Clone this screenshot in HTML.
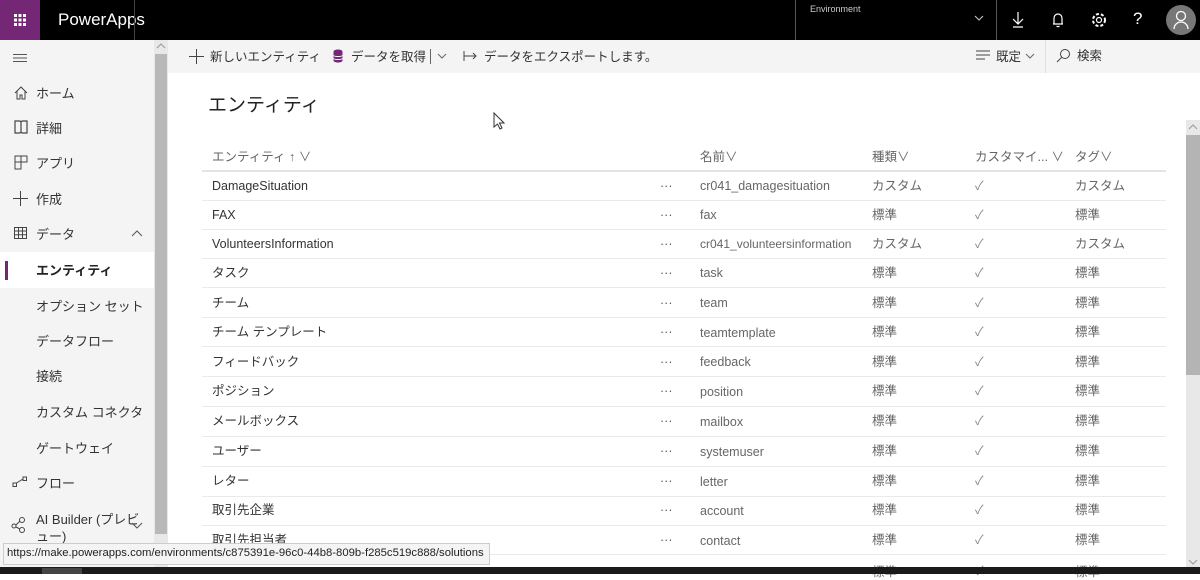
<!DOCTYPE html>
<html><head><meta charset="utf-8">
<style>
*{margin:0;padding:0;box-sizing:border-box}
body{width:1200px;height:574px;overflow:hidden;background:#fff;font-family:"Liberation Sans","Noto Sans CJK JP",sans-serif;color:#333;position:relative;font-size:13px}
.a{position:absolute;white-space:nowrap}
.top{left:0;top:0;width:1200px;height:40px;background:#000}
.waffle{left:0;top:0;width:40px;height:40px;background:#742774}
.side{left:0;top:40px;width:154px;height:527px;background:#f4f4f4}
.sb{left:154px;top:40px;width:14px;height:527px;background:#e8e8e8}
.tb{left:168px;top:40px;width:1032px;height:33px;background:#f4f4f4}
.nav{font-size:13px;color:#333;margin-top:-2px}
.row{left:202px;width:964px;height:1px;background:#eaeaea}
.c{font-size:12.5px;color:#333}
.j{margin-top:-3px}
.d{margin-top:4px;color:#555}
.g{color:#666}
.k{color:#888}
svg{position:absolute}
</style></head><body>
<div class="a top"></div>
<div class="a waffle"></div>
<svg style="left:14px;top:14px" width="12" height="12" fill="#fff"><rect x="0" y="0" width="3" height="3"/><rect x="4.5" y="0" width="3" height="3"/><rect x="9" y="0" width="3" height="3"/><rect x="0" y="4.5" width="3" height="3"/><rect x="4.5" y="4.5" width="3" height="3"/><rect x="9" y="4.5" width="3" height="3"/><rect x="0" y="9" width="3" height="3"/><rect x="4.5" y="9" width="3" height="3"/><rect x="9" y="9" width="3" height="3"/></svg>
<div class="a" style="left:58px;top:10px;color:#fff;font-size:17px">PowerApps</div>
<div class="a" style="left:134px;top:0;width:1px;height:40px;background:#444"></div>
<div class="a" style="left:795px;top:0;width:202px;height:40px;border-left:1px solid #555;border-right:1px solid #555"></div>
<div class="a" style="left:810px;top:4px;color:#ccc;font-size:9px">Environment</div>
<svg style="left:974px;top:14px" width="10" height="8"><path d="M1 2l4 4 4-4" stroke="#ccc" fill="none"/></svg>
<svg style="left:1010px;top:11px" width="16" height="18"><path d="M8 1v12M3 8l5 5 5-5M3 16h10" stroke="#fff" fill="none" stroke-width="1.2"/></svg>
<svg style="left:1050px;top:11px" width="16" height="18"><path d="M4 13V7a4 4 0 018 0v6H3h10M6.5 15.5h3" stroke="#fff" fill="none" stroke-width="1.2"/></svg>
<svg style="left:1090px;top:11px" width="18" height="18"><circle cx="9" cy="9" r="2.5" stroke="#fff" fill="none" stroke-width="1.2"/><circle cx="9" cy="9" r="6" stroke="#fff" fill="none" stroke-width="2" stroke-dasharray="3 2"/></svg>
<div class="a" style="left:1133px;top:9px;color:#fff;font-size:17px">?</div>
<div class="a" style="left:1166px;top:5px;width:30px;height:30px;border-radius:50%;background:#777"></div>
<svg style="left:1172px;top:10px" width="18" height="20"><circle cx="9" cy="6" r="4.5" stroke="#fff" fill="none" stroke-width="1.3"/><path d="M2 19a7 7 0 0114 0" stroke="#fff" fill="none" stroke-width="1.3"/></svg>

<div class="a side"></div>
<div class="a sb"></div>
<div class="a" style="left:155px;top:54px;width:12px;height:480px;background:#b8b8b8"></div>
<svg style="left:156px;top:42px" width="10" height="8"><path d="M1 6l4-4 4 4" stroke="#999" fill="none"/></svg>
<svg style="left:13px;top:53px" width="14" height="10"><path d="M0 1.5h14M0 5h14M0 8.5h14" stroke="#555"/></svg>
<svg style="left:14px;top:86px" width="14" height="14"><path d="M1 7L7 1l6 6M3 5v8h3V9h2v4h3V5" stroke="#444" fill="none"/></svg>
<div class="a nav" style="left:36px;top:85px">ホーム</div>
<svg style="left:14px;top:120px" width="14" height="14"><path d="M1 1h5l1 1 1-1h5v12H8l-1 -1-1 1H1zM7 2v10" stroke="#444" fill="none" stroke-width="1.2"/></svg>
<div class="a nav" style="left:36px;top:120px">詳細</div>
<svg style="left:14px;top:155px" width="14" height="15"><path d="M1 1h12v6H7v7H1zM7 1v6M1 7h6" stroke="#444" fill="none"/></svg>
<div class="a nav" style="left:36px;top:155px">アプリ</div>
<svg style="left:13px;top:191px" width="15" height="15"><path d="M7.5 0v15M0 7.5h15" stroke="#444"/></svg>
<div class="a nav" style="left:36px;top:191px">作成</div>
<svg style="left:14px;top:227px" width="13" height="12"><path d="M.5.5h12v11H.5zM.5 4h12M.5 7.7h12M4.5.5v11M8.5.5v11" stroke="#444" fill="none"/></svg>
<div class="a nav" style="left:36px;top:226px">データ</div>
<svg style="left:131px;top:230px" width="12" height="8"><path d="M1 6l5-5 5 5" stroke="#555" fill="none"/></svg>
<div class="a" style="left:0;top:252px;width:154px;height:36px;background:#fff"></div>
<div class="a" style="left:5px;top:261px;width:3px;height:19px;background:#742774"></div>
<div class="a nav" style="left:36px;top:262px;font-weight:bold;color:#222">エンティティ</div>
<div class="a nav" style="left:36px;top:298px">オプション セット</div>
<div class="a nav" style="left:36px;top:333px">データフロー</div>
<div class="a nav" style="left:36px;top:368px">接続</div>
<div class="a nav" style="left:36px;top:404px">カスタム コネクタ</div>
<div class="a nav" style="left:36px;top:440px">ゲートウェイ</div>
<svg style="left:12px;top:476px" width="16" height="12"><rect x="1" y="7" width="3.5" height="3.5" stroke="#444" fill="none"/><rect x="11" y="1" width="3.5" height="3.5" stroke="#444" fill="none"/><path d="M4.5 7L11 3" stroke="#444"/></svg>
<div class="a nav" style="left:36px;top:475px">フロー</div>
<svg style="left:11px;top:516px" width="18" height="18"><circle cx="3" cy="10" r="2" stroke="#444" fill="none"/><circle cx="11" cy="4" r="2.5" stroke="#444" fill="none"/><circle cx="11" cy="14" r="2.5" stroke="#444" fill="none"/><path d="M5 9l4-4M5 11l4 2" stroke="#444"/></svg>
<div class="a nav" style="left:36px;top:511px">AI Builder (プレビ</div>
<div class="a nav" style="left:36px;top:528px">ュー)</div>
<svg style="left:131px;top:522px" width="12" height="8"><path d="M1 1l5 5 5-5" stroke="#555" fill="none"/></svg>

<div class="a tb"></div>
<svg style="left:189px;top:49px" width="15" height="15"><path d="M7.5 0v15M0 7.5h15" stroke="#444"/></svg>
<div class="a c j" style="left:210px;top:49px">新しいエンティティ</div>
<svg style="left:333px;top:49px" width="10" height="14"><ellipse cx="5" cy="2.5" rx="4.5" ry="2" fill="#742774"/><path d="M.5 3v8.5c0 1.2 2 2 4.5 2s4.5-.8 4.5-2V3" fill="#742774"/><path d="M.5 6.5c1 1.3 8 1.3 9 0M.5 9.5c1 1.3 8 1.3 9 0" stroke="#fff" fill="none"/></svg>
<div class="a c j" style="left:351px;top:49px">データを取得</div>
<div class="a" style="left:430px;top:49px;width:1px;height:15px;background:#666"></div>
<svg style="left:437px;top:53px" width="10" height="7"><path d="M1 1l4 4 4-4" stroke="#666" fill="none"/></svg>
<svg style="left:463px;top:51px" width="15" height="10"><path d="M1 0v10M1 5h12M10 2l3 3-3 3" stroke="#444" fill="none"/></svg>
<div class="a c j" style="left:484px;top:49px">データをエクスポートします。</div>
<svg style="left:976px;top:50px" width="14" height="10"><path d="M0 1h14M0 5h14M0 9h9" stroke="#444"/></svg>
<div class="a c j" style="left:996px;top:49px">既定</div>
<svg style="left:1025px;top:53px" width="10" height="7"><path d="M1 1l4 4 4-4" stroke="#666" fill="none"/></svg>
<div class="a" style="left:1045px;top:40px;width:1px;height:33px;background:#e0e0e0"></div>
<svg style="left:1056px;top:48px" width="15" height="15"><circle cx="9" cy="6" r="4.5" stroke="#444" fill="none"/><path d="M5.8 9.2L1 14" stroke="#444"/></svg>
<div class="a c j" style="left:1077px;top:48px">検索</div>

<div class="a j" style="left:208px;top:93px;font-size:19px;color:#222">エンティティ</div>
<svg style="left:493px;top:112px" width="12" height="18"><path d="M1 1v14l3.5-3 2.5 5 2-1-2.5-5H11z" fill="#fff" stroke="#333"/></svg>

<div class="a" style="left:1186px;top:120px;width:14px;height:447px;background:#e8e8e8"></div>
<div class="a" style="left:1186px;top:135px;width:14px;height:240px;background:#b4b4b4"></div>
<svg style="left:1188px;top:123px" width="10" height="8"><path d="M1 6l4-4 4 4" stroke="#999" fill="none"/></svg>
<svg style="left:1188px;top:558px" width="10" height="8"><path d="M1 2l4 4 4-4" stroke="#999" fill="none"/></svg>

<div class="a c g j" style="left:212px;top:149px">エンティティ ↑ ∨</div>
<div class="a c g j" style="left:700px;top:149px">名前∨</div>
<div class="a c g j" style="left:872px;top:149px">種類∨</div>
<div class="a c g j" style="left:975px;top:149px">カスタマイ... ∨</div>
<div class="a c g j" style="left:1075px;top:149px">タグ∨</div>
<div class="a row" style="top:170px;height:2px;background:#e4e4e4"></div>

<div class="a c" style="left:212px;top:179px">DamageSituation</div><div class="a c d" style="left:660px;top:175px">···</div><div class="a c g" style="left:700px;top:179px">cr041_damagesituation</div><div class="a c g j" style="left:872px;top:178px">カスタム</div><div class="a c k j" style="left:975px;top:178px">✓</div><div class="a c g j" style="left:1075px;top:178px">カスタム</div><div class="a row" style="top:200px"></div>
<div class="a c" style="left:212px;top:208px">FAX</div><div class="a c d" style="left:660px;top:204px">···</div><div class="a c g" style="left:700px;top:208px">fax</div><div class="a c g j" style="left:872px;top:207px">標準</div><div class="a c k j" style="left:975px;top:207px">✓</div><div class="a c g j" style="left:1075px;top:207px">標準</div><div class="a row" style="top:229px"></div>
<div class="a c" style="left:212px;top:237px">VolunteersInformation</div><div class="a c d" style="left:660px;top:233px">···</div><div class="a c g" style="left:700px;top:237px;font-size:12px">cr041_volunteersinformation</div><div class="a c g j" style="left:872px;top:236px">カスタム</div><div class="a c k j" style="left:975px;top:236px">✓</div><div class="a c g j" style="left:1075px;top:236px">カスタム</div><div class="a row" style="top:258px"></div>
<div class="a c j" style="left:212px;top:265px">タスク</div><div class="a c d" style="left:660px;top:262px">···</div><div class="a c g" style="left:700px;top:266px">task</div><div class="a c g j" style="left:872px;top:265px">標準</div><div class="a c k j" style="left:975px;top:265px">✓</div><div class="a c g j" style="left:1075px;top:265px">標準</div><div class="a row" style="top:287px"></div>
<div class="a c j" style="left:212px;top:295px">チーム</div><div class="a c d" style="left:660px;top:292px">···</div><div class="a c g" style="left:700px;top:296px">team</div><div class="a c g j" style="left:872px;top:295px">標準</div><div class="a c k j" style="left:975px;top:295px">✓</div><div class="a c g j" style="left:1075px;top:295px">標準</div><div class="a row" style="top:317px"></div>
<div class="a c j" style="left:212px;top:324px">チーム テンプレート</div><div class="a c d" style="left:660px;top:321px">···</div><div class="a c g" style="left:700px;top:326px">teamtemplate</div><div class="a c g j" style="left:872px;top:324px">標準</div><div class="a c k j" style="left:975px;top:324px">✓</div><div class="a c g j" style="left:1075px;top:324px">標準</div><div class="a row" style="top:346px"></div>
<div class="a c j" style="left:212px;top:354px">フィードバック</div><div class="a c d" style="left:660px;top:351px">···</div><div class="a c g" style="left:700px;top:355px">feedback</div><div class="a c g j" style="left:872px;top:354px">標準</div><div class="a c k j" style="left:975px;top:354px">✓</div><div class="a c g j" style="left:1075px;top:354px">標準</div><div class="a row" style="top:376px"></div>
<div class="a c j" style="left:212px;top:383px">ポジション</div><div class="a c d" style="left:660px;top:380px">···</div><div class="a c g" style="left:700px;top:385px">position</div><div class="a c g j" style="left:872px;top:383px">標準</div><div class="a c k j" style="left:975px;top:383px">✓</div><div class="a c g j" style="left:1075px;top:383px">標準</div><div class="a row" style="top:406px"></div>
<div class="a c j" style="left:212px;top:413px">メールボックス</div><div class="a c d" style="left:660px;top:410px">···</div><div class="a c g" style="left:700px;top:415px">mailbox</div><div class="a c g j" style="left:872px;top:413px">標準</div><div class="a c k j" style="left:975px;top:413px">✓</div><div class="a c g j" style="left:1075px;top:413px">標準</div><div class="a row" style="top:436px"></div>
<div class="a c j" style="left:212px;top:443px">ユーザー</div><div class="a c d" style="left:660px;top:440px">···</div><div class="a c g" style="left:700px;top:445px">systemuser</div><div class="a c g j" style="left:872px;top:443px">標準</div><div class="a c k j" style="left:975px;top:443px">✓</div><div class="a c g j" style="left:1075px;top:443px">標準</div><div class="a row" style="top:466px"></div>
<div class="a c j" style="left:212px;top:473px">レター</div><div class="a c d" style="left:660px;top:470px">···</div><div class="a c g" style="left:700px;top:475px">letter</div><div class="a c g j" style="left:872px;top:473px">標準</div><div class="a c k j" style="left:975px;top:473px">✓</div><div class="a c g j" style="left:1075px;top:473px">標準</div><div class="a row" style="top:496px"></div>
<div class="a c j" style="left:212px;top:502px">取引先企業</div><div class="a c d" style="left:660px;top:499px">···</div><div class="a c g" style="left:700px;top:504px">account</div><div class="a c g j" style="left:872px;top:502px">標準</div><div class="a c k j" style="left:975px;top:502px">✓</div><div class="a c g j" style="left:1075px;top:502px">標準</div><div class="a row" style="top:525px"></div>
<div class="a c j" style="left:212px;top:532px">取引先担当者</div><div class="a c d" style="left:660px;top:529px">···</div><div class="a c g" style="left:700px;top:534px">contact</div><div class="a c g j" style="left:872px;top:532px">標準</div><div class="a c k j" style="left:975px;top:532px">✓</div><div class="a c g j" style="left:1075px;top:532px">標準</div><div class="a row" style="top:554px"></div>
<div class="a c k" style="left:975px;top:560px">✓</div><div class="a c g" style="left:1075px;top:561px">標準</div><div class="a c g" style="left:872px;top:561px">標準</div>

<div class="a" style="left:3px;top:543px;width:487px;height:22px;background:#f4f4f4;border:1px solid #ccc"></div>
<div class="a" style="left:7px;top:547px;font-size:11.3px;color:#222">https://make.powerapps.com/environments/c875391e-96c0-44b8-809b-f285c519c888/solutions</div>
<div class="a" style="left:0;top:567px;width:1200px;height:7px;background:#1a1a1a"></div>
<div class="a" style="left:42px;top:568px;width:40px;height:6px;background:#444"></div>
</body></html>
